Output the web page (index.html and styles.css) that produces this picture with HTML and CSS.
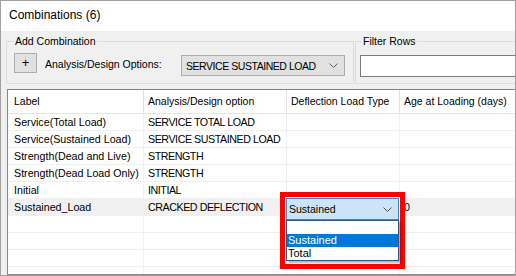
FILE: index.html
```html
<!DOCTYPE html>
<html lang="en">
<head>
    <meta charset="UTF-8">
    <meta name="viewport" content="width=device-width, initial-scale=1.0">
    <title>Combinations</title>
    <link rel="stylesheet" href="styles.css">
</head>
<body>
    <div class="window">
        <div class="title">Combinations (6)</div>

        <div class="panel">
            <div class="toolbar">
                <fieldset class="group add-group">
                    <legend>Add Combination</legend>
                    <div class="group-row">
                        <button class="add-btn">+</button>
                        <span class="opt-label">Analysis/Design Options:</span>
                        <div class="select">
                            <span class="caps">SERVICE SUSTAINED LOAD</span>
                            <svg class="chevron" width="9" height="5" viewBox="0 0 9 5"><path d="M0.5 0.5 L4.5 4.5 L8.5 0.5" fill="none" stroke="#606060" stroke-width="1"/></svg>
                        </div>
                    </div>
                </fieldset>

                <fieldset class="group filter-group">
                    <legend>Filter Rows</legend>
                    <div class="filter-input"></div>
                </fieldset>
            </div>

            <div class="grid">
                <div class="grid-row header">
                    <div class="cell first">Label</div>
                    <div class="cell">Analysis/Design option</div>
                    <div class="cell">Deflection Load Type</div>
                    <div class="cell">Age at Loading (days)</div>
                </div>
                <div class="grid-row">
                    <div class="cell first">Service(Total Load)</div>
                    <div class="cell caps">SERVICE TOTAL LOAD</div>
                    <div class="cell"></div>
                    <div class="cell"></div>
                </div>
                <div class="grid-row">
                    <div class="cell first">Service(Sustained Load)</div>
                    <div class="cell caps">SERVICE SUSTAINED LOAD</div>
                    <div class="cell"></div>
                    <div class="cell"></div>
                </div>
                <div class="grid-row">
                    <div class="cell first">Strength(Dead and Live)</div>
                    <div class="cell caps">STRENGTH</div>
                    <div class="cell"></div>
                    <div class="cell"></div>
                </div>
                <div class="grid-row">
                    <div class="cell first">Strength(Dead Load Only)</div>
                    <div class="cell caps">STRENGTH</div>
                    <div class="cell"></div>
                    <div class="cell"></div>
                </div>
                <div class="grid-row">
                    <div class="cell first">Initial</div>
                    <div class="cell caps">INITIAL</div>
                    <div class="cell"></div>
                    <div class="cell"></div>
                </div>
                <div class="grid-row selected">
                    <div class="cell first">Sustained_Load</div>
                    <div class="cell caps">CRACKED DEFLECTION</div>
                    <div class="cell"></div>
                    <div class="cell">0</div>
                </div>
                <div class="grid-row"><div class="cell first"></div><div class="cell"></div><div class="cell"></div><div class="cell"></div></div>
                <div class="grid-row"><div class="cell first"></div><div class="cell"></div><div class="cell"></div><div class="cell"></div></div>
                <div class="grid-row"><div class="cell first"></div><div class="cell"></div><div class="cell"></div><div class="cell"></div></div>
                <div class="grid-row"><div class="cell first"></div><div class="cell"></div><div class="cell"></div><div class="cell"></div></div>

                <!-- open combo editor in the Deflection Load Type cell -->
                <div class="highlight"></div>
                <div class="combo">
                    <span>Sustained</span>
                    <svg class="chevron" width="9" height="5" viewBox="0 0 9 5"><path d="M0.5 0.5 L4.5 4.5 L8.5 0.5" fill="none" stroke="#505050" stroke-width="1"/></svg>
                </div>
                <ul class="combo-list">
                    <li></li>
                    <li class="active">Sustained</li>
                    <li>Total</li>
                </ul>
            </div>
        </div>
    </div>
</body>
</html>
```

FILE: styles.css
```css
* {
    box-sizing: border-box;
}

body {
    margin: 0;
    font-family: "Liberation Sans", Arial, sans-serif;
    color: #000;
}

.window {
    width: 516px;
    height: 276px;
    border: 1px solid #a0a0a0;
    overflow: hidden;
    display: flex;
    flex-direction: column;
}

.title {
    height: 30px;
    flex-shrink: 0;
    background: #fff;
    padding-left: 8px;
    font-size: 12px;
    line-height: 29px;
}

.panel {
    flex: 1;
    min-height: 0;
    background: #f0f0f0;
    padding: 4px 0 0 5px;
    display: flex;
    flex-direction: column;
}

.toolbar {
    display: flex;
    gap: 1px;
    flex-shrink: 0;
}

.group {
    margin: 0;
    border: 1px solid #dcdcdc;
    min-width: 0;
    font-size: 10.5px;
}

.group legend {
    padding: 0 1px;
    line-height: 13px;
}

.add-group {
    width: 348px;
    flex-shrink: 0;
    padding: 0 8px 6px 7px;
}

.filter-group {
    width: 200px;
    flex-shrink: 0;
    padding: 0 4px 6px 4px;
}

.filter-group legend {
    margin-left: 2px;
}

.group-row {
    display: flex;
    align-items: flex-start;
}

.add-btn {
    width: 23px;
    height: 20px;
    margin-top: 5px;
    padding: 0;
    border: 1px solid #adadad;
    background: #e1e1e1;
    font-family: "Liberation Sans", Arial, sans-serif;
    font-size: 13px;
    line-height: 16px;
    color: #000;
}

.opt-label {
    margin-left: 8px;
    margin-top: 10px;
    line-height: 13px;
}

.select {
    margin-left: auto;
    margin-top: 7px;
    width: 164px;
    height: 21px;
    border: 1px solid #adadad;
    background: #e1e1e1;
    display: flex;
    align-items: center;
    justify-content: space-between;
    padding: 0 6px 0 4px;
    font-size: 10.5px;
}

/* upper-case values run narrower in the original UI font */
.caps {
    letter-spacing: -0.45px;
}

.filter-input {
    margin-top: 7px;
    height: 22px;
    width: 190px;
    border: 1px solid #7a7a7a;
    background: #fff;
}

.grid {
    position: relative;
    flex: 1;
    min-height: 0;
    width: 560px;
    margin: 5px 0 0 1px;
    border: 1px solid #828790;
    background: #fff;
    overflow: hidden;
    font-size: 10.7px;
}

.grid-row {
    display: grid;
    grid-template-columns: 136px 143px 113px 160px;
    height: 17px;
    border-bottom: 1px solid #f0f0f0;
}

.grid-row .cell {
    border-right: 1px solid #f0f0f0;
    padding: 1px 0 0 4px;
    line-height: 15px;
    white-space: nowrap;
}

.grid-row .cell.first {
    padding-left: 6px;
}

.grid-row.header {
    height: 24px;
    border-bottom-color: #e5e5e5;
    font-size: 10.5px;
}

.grid-row.header .cell {
    border-right-color: #e0e0e0;
    line-height: 22px;
    padding-top: 0;
}

.grid-row.selected {
    background: #f0f0f0;
}

.highlight {
    position: absolute;
    left: 272px;
    top: 102px;
    width: 125px;
    height: 77px;
    border: 5px solid #f00;
}

.combo {
    position: absolute;
    left: 278px;
    top: 108px;
    width: 113px;
    height: 22px;
    border: 1px solid #3c8bd0;
    background: #cce4f7;
    display: flex;
    align-items: center;
    justify-content: space-between;
    padding: 0 6px 0 2px;
    font-size: 10.5px;
}

.combo-list {
    position: absolute;
    left: 278px;
    top: 130px;
    width: 113px;
    margin: 0;
    padding: 0;
    list-style: none;
    border: 1px solid #2c5a86;
    background: #fff;
    box-shadow: 2px 2px 2px rgba(0, 0, 0, 0.3);
    font-size: 11px;
}

.combo-list li {
    height: 13px;
    line-height: 13px;
    padding-left: 1px;
}

.combo-list li.active {
    background: #0078d7;
    color: #fff;
}
```
